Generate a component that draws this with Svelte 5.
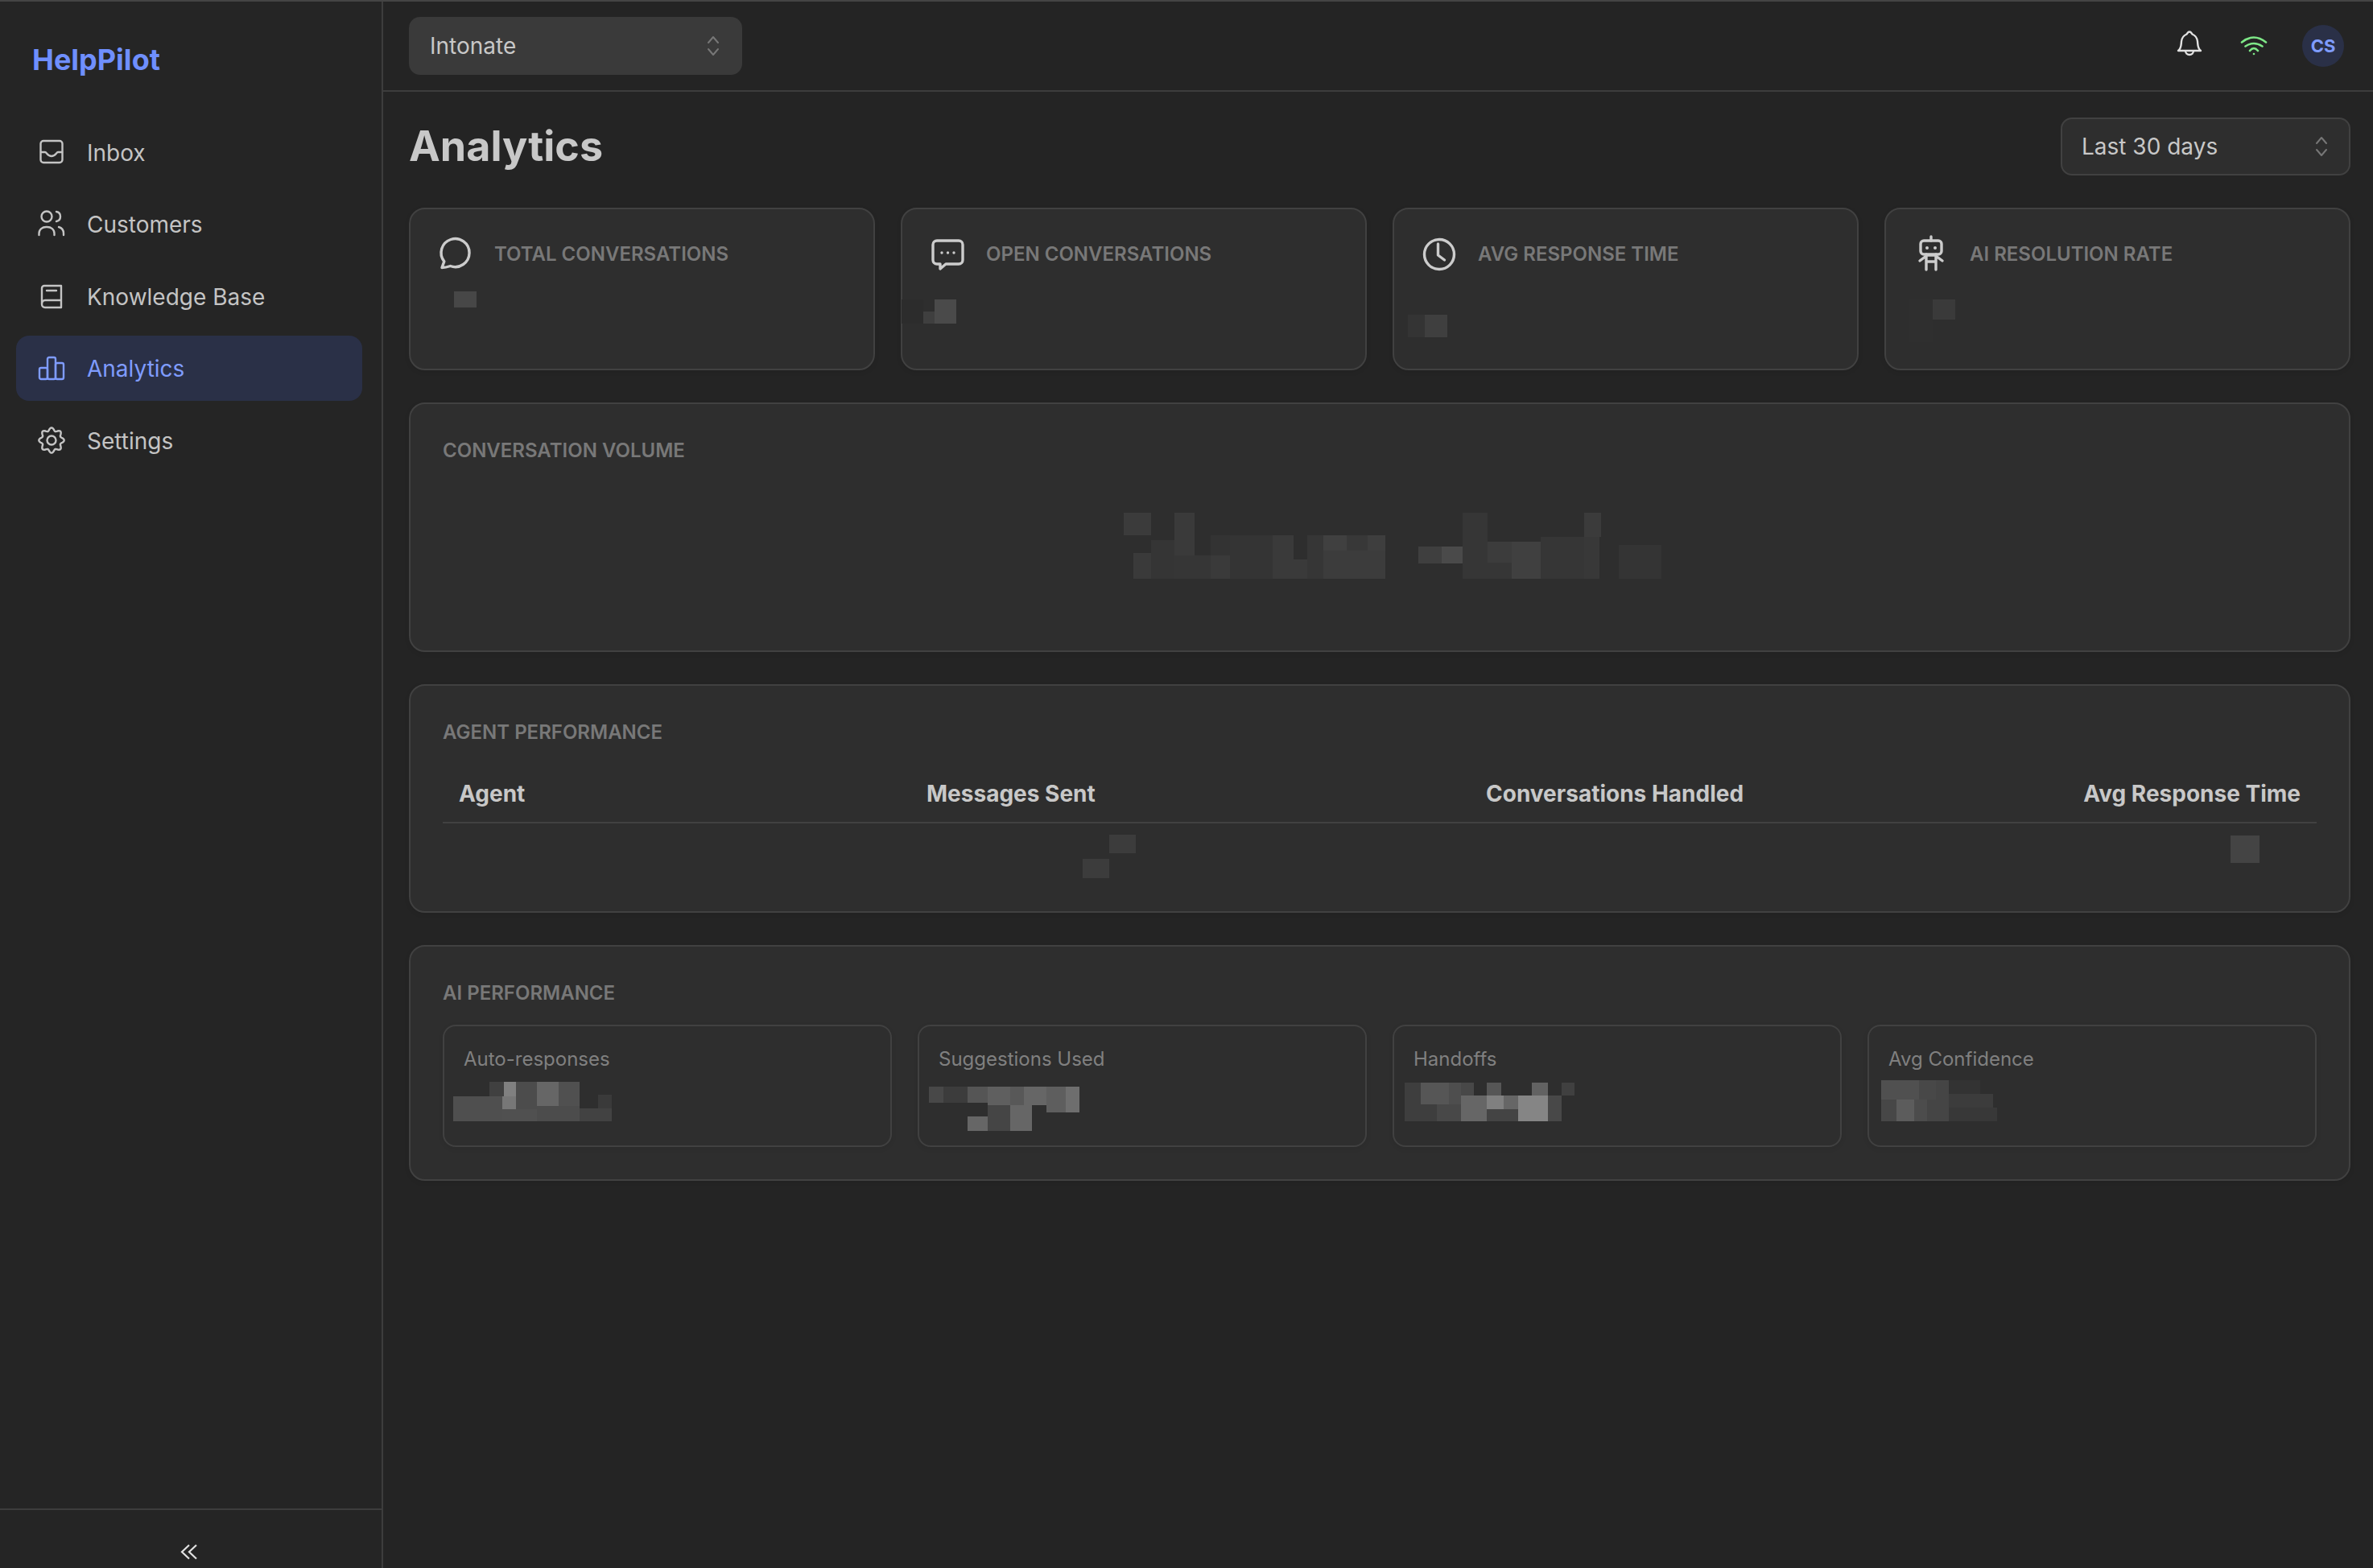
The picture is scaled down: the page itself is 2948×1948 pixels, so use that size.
<script>
  const mk = (ox, oy, sx, sy, list) =>
    list.map(([x0, y0, x1, y1, c]) => ({
      x: ox + x0 / sx,
      y: oy + y0 / sy,
      w: (x1 - x0) / sx,
      h: (y1 - y0) / sy,
      c
    }));

  const gearPath = (() => {
    const pts = [];
    for (let i = 0; i < 96; i++) {
      const t = (i / 96) * Math.PI * 2;
      const r = 13.8 + 1.9 * Math.cos(t * 8);
      pts.push(`${(18 + r * Math.sin(t)).toFixed(2)} ${(18 - r * Math.cos(t)).toFixed(2)}`);
    }
    return 'M' + pts.join('L') + 'Z';
  })();

  const nav = [
    { id: 'inbox', label: 'Inbox' },
    { id: 'users', label: 'Customers' },
    { id: 'book', label: 'Knowledge Base' },
    { id: 'bars', label: 'Analytics', active: true },
    { id: 'gear', label: 'Settings' }
  ];

  const stats = [
    {
      id: 'chat', label: 'TOTAL CONVERSATIONS', vb: '542 348 511 78',
      rects: mk(0, 0, 1, 1, [[564, 362, 592, 382, '#474747']])
    },
    {
      id: 'dots', label: 'OPEN CONVERSATIONS', vb: '1153 348 511 78',
      rects: mk(0, 0, 1, 1, [[1120, 372, 1147, 402, '#2c2c2c'], [1161, 372, 1188, 402, '#4a4a4a'], [1147, 387, 1161, 402, '#3f3f3f']])
    },
    {
      id: 'clock', label: 'AVG RESPONSE TIME', vb: '1764 348 511 78',
      rects: mk(0, 0, 1, 1, [[1749, 391, 1770, 419, '#343434'], [1770, 391, 1798, 419, '#3f3f3f']])
    },
    {
      id: 'robot', label: 'AI RESOLUTION RATE', vb: '2375 348 511 78',
      rects: mk(0, 0, 1, 1, [[2372, 372, 2401, 425, '#2f2f2f'], [2401, 372, 2429, 397, '#3a3a3a']])
    }
  ];

  const volume = mk(490, 480, 0.98, 2.376, [
    [888, 373, 921, 440, '#3b3b3b'], [921, 455, 950, 568, '#353535'], [900, 492, 921, 568, '#3a3a3a'],
    [950, 373, 974, 500, '#3a3a3a'], [950, 500, 994, 568, '#363636'], [994, 440, 1017, 500, '#333333'],
    [994, 500, 1017, 568, '#3a3a3a'], [1017, 440, 1069, 568, '#343434'], [1069, 440, 1095, 568, '#3a3a3a'],
    [1095, 510, 1111, 568, '#3a3a3a'], [1111, 440, 1131, 568, '#363636'], [1131, 485, 1206, 568, '#3c3c3c'],
    [1131, 440, 1159, 485, '#404040'], [1159, 440, 1185, 485, '#383838'], [1185, 440, 1206, 485, '#3e3e3e'],
    [1247, 473, 1275, 523, '#3f3f3f'], [1275, 473, 1300, 523, '#4a4a4a'], [1300, 373, 1331, 568, '#363636'],
    [1331, 459, 1360, 520, '#3c3c3c'], [1331, 520, 1360, 568, '#363636'], [1360, 459, 1396, 568, '#404040'],
    [1396, 444, 1448, 568, '#363636'], [1448, 373, 1469, 444, '#3b3b3b'], [1448, 444, 1467, 568, '#383838'],
    [1491, 468, 1543, 568, '#343434']
  ]);

  const agents = mk(0, 0, 1, 1, [
    [1378, 1037, 1411, 1060, '#3c3c3c'], [1345, 1067, 1378, 1091, '#3c3c3c'], [2771, 1038, 2807, 1072, '#444444']
  ]);

  const ai = [
    {
      label: 'Auto-responses', vb: '576 1339 506 60',
      rects: mk(490, 1160, 1.206, 3, [
        [88, 606, 162, 698, '#4f4f4f'], [142, 552, 164, 606, '#404040'], [164, 552, 182, 606, '#808080'],
        [162, 654, 214, 698, '#505050'], [182, 552, 214, 654, '#4c4c4c'], [162, 606, 182, 654, '#777777'],
        [214, 552, 246, 642, '#666666'], [246, 552, 277, 642, '#505050'], [214, 642, 277, 698, '#4c4c4c'],
        [277, 651, 326, 698, '#424242'], [305, 600, 326, 651, '#3a3a3a']
      ])
    },
    {
      label: 'Suggestions Used', vb: '1166 1339 506 60',
      rects: mk(490, 1160, 1.206, 3, [
        [801, 570, 823, 630, '#484848'], [823, 570, 859, 630, '#3c3c3c'], [859, 570, 889, 630, '#555555'],
        [889, 570, 923, 640, '#5f5f5f'], [923, 570, 943, 640, '#585858'], [943, 570, 977, 640, '#666666'],
        [977, 570, 1006, 665, '#5e5e5e'], [1006, 570, 1026, 665, '#6e6e6e'], [889, 640, 923, 735, '#454545'],
        [923, 640, 955, 735, '#666666'], [859, 681, 889, 735, '#666666']
      ])
    },
    {
      label: 'Handoffs', vb: '1756 1339 506 60',
      rects: mk(1700, 1160, 1.256, 3, [
        [57, 555, 82, 636, '#3e3e3e'], [82, 555, 125, 636, '#565656'], [125, 555, 144, 636, '#4e4e4e'],
        [144, 555, 165, 603, '#484848'], [185, 555, 207, 603, '#565656'], [255, 555, 280, 603, '#626262'],
        [302, 555, 322, 603, '#404040'], [57, 636, 107, 698, '#3e3e3e'], [107, 636, 144, 698, '#484848'],
        [144, 603, 185, 698, '#666666'], [185, 603, 211, 654, '#808080'], [211, 603, 234, 654, '#666666'],
        [185, 654, 234, 698, '#444444'], [234, 603, 280, 698, '#858585'], [280, 603, 302, 698, '#484848']
      ])
    },
    {
      label: 'Avg Confidence', vb: '2346 1339 506 60',
      rects: mk(1700, 1160, 1.256, 3, [
        [800, 546, 859, 618, '#505050'], [859, 546, 885, 618, '#484848'], [885, 546, 906, 618, '#454545'],
        [906, 546, 955, 597, '#333333'], [800, 618, 824, 698, '#474747'], [824, 618, 851, 698, '#5c5c5c'],
        [851, 618, 872, 698, '#4c4c4c'], [872, 618, 906, 698, '#454545'], [906, 597, 975, 648, '#3c3c3c'],
        [906, 648, 981, 698, '#383838']
      ])
    }
  ];
</script>

{#snippet mosaic(vb, rects, cls)}
  <svg class="area {cls}" viewBox={vb} width={vb.split(' ')[2]} height={vb.split(' ')[3]} aria-hidden="true">
    {#each rects as r}
      <rect x={r.x} y={r.y} width={r.w} height={r.h} fill={r.c} shape-rendering="crispEdges" />
    {/each}
  </svg>
{/snippet}

{#snippet updown()}
  <svg class="updown" viewBox="0 0 20 28" width="20" height="28" aria-hidden="true">
    <path d="M4 10l6-7 6 7M4 18l6 7 6-7" />
  </svg>
{/snippet}

{#snippet navIcon(id)}
  <svg class="nav-icon" viewBox="0 0 36 36" width="36" height="36" aria-hidden="true">
    {#if id === 'inbox'}
      <rect x="4.5" y="4" width="27" height="27" rx="3.5" />
      <path d="M5 18h5c2 0 3 5 8 5s6-5 8-5h5" />
    {:else if id === 'users'}
      <circle cx="12" cy="9" r="6.5" />
      <path d="M24 3c3 .5 5 3 5 6s-2 5.5-5 6M2.500 32v-2c0-5 4-8 9-8h1c5 0 9 3 9 8v2M27 22c3.500 1 6 4 6 8v2" />
    {:else if id === 'book'}
      <path d="M6 28V8a3 3 0 0 1 3-3h21v27H10c-2.500 0-4-1.500-4-4s1.500-5 4-5h20M12 11h12" />
    {:else if id === 'bars'}
      <rect x="3" y="18" width="10" height="14" rx="2" />
      <rect x="13" y="5" width="10" height="27" rx="2" />
      <rect x="23" y="12" width="10" height="20" rx="2" />
    {:else}
      <path d={gearPath} />
      <circle cx="18" cy="18" r="5.500" />
    {/if}
  </svg>
{/snippet}

{#snippet statIcon(id)}
  <svg class="stat-icon" viewBox="0 0 48 48" width="48" height="48" aria-hidden="true">
    {#if id === 'chat'}
      <path d="M7 40.500l2.800-7.600A17.500 17.500 0 1 1 17.500 38.500c-3 1-7 2-10.500 2z" />
    {:else if id === 'dots'}
      <path d="M11 7h27a5 5 0 0 1 5 5v19a5 5 0 0 1-5 5H22l-7 6v-6h-4a5 5 0 0 1-5-5V12a5 5 0 0 1 5-5z" />
      <circle class="solid" cx="17" cy="22" r="1.700" />
      <circle class="solid" cx="24.500" cy="22" r="1.700" />
      <circle class="solid" cx="32" cy="22" r="1.700" />
    {:else if id === 'clock'}
      <circle cx="24" cy="24" r="18.500" />
      <path d="M22.500 11v14l8 6" />
    {:else}
      <path d="M24 2v5M18 24v19M30 24v19M18 33h12M18 26l-8 6M30 26l8 6M18 25h12" />
      <rect x="11" y="7" width="26" height="17" rx="4" />
      <circle class="solid" cx="19" cy="16" r="2" />
      <circle class="solid" cx="29" cy="16" r="2" />
    {/if}
  </svg>
{/snippet}

<div class="shell">
  <aside class="sidebar">
    <div class="logo">HelpPilot</div>
    <nav class="nav">
      {#each nav as item}
        <a class="nav-item" class:active={item.active} href="#{item.id}">
          {@render navIcon(item.id)}
          <span>{item.label}</span>
        </a>
      {/each}
    </nav>
    <div class="collapse">
      <svg viewBox="0 0 22 20" width="22" height="20" aria-hidden="true">
        <path d="M11 1.500L2 10l9 8.500M20 1.500L11 10l9 8.500" />
      </svg>
    </div>
  </aside>

  <div class="main">
    <header class="topbar">
      <div class="workspace">
        <span>Intonate</span>
        {@render updown()}
      </div>
      <div class="top-actions">
        <svg class="bell" viewBox="0 0 36 36" width="36" height="36" aria-hidden="true">
          <path d="M18 2.500c-2 0-2.500 2-3.500 3C11 7 8.500 9.500 8 14.500c-.5 5 0 8.500-4 11.500h28c-4-3-3.500-6.500-4-11.500-.5-5-3-7.500-6.500-9-1-1-1.500-3-3.500-3z" />
          <path d="M13 26a5 5 0 0 0 10 0" />
        </svg>
        <svg class="wifi" viewBox="0 0 36 36" width="36" height="36" aria-hidden="true">
          <path d="M3 13.500Q18 1.500 33 13.500M7.500 18.500Q18 11.500 28.500 18.500M13 24Q18 18 23 24" />
          <circle cx="18" cy="28" r="1.300" />
        </svg>
        <div class="avatar">CS</div>
      </div>
    </header>

    <main class="content">
      <div class="page-head">
        <h1>Analytics</h1>
        <div class="range">
          <span>Last 30 days</span>
          {@render updown()}
        </div>
      </div>

      <section class="stats">
        {#each stats as s}
          <div class="card stat">
            <div class="stat-head">
              {@render statIcon(s.id)}
              <span class="label">{s.label}</span>
            </div>
            {@render mosaic(s.vb, s.rects, 'stat-value')}
          </div>
        {/each}
      </section>

      <section class="card panel">
        <div class="label">CONVERSATION VOLUME</div>
        {@render mosaic('550 590 2328 178', volume, 'chart')}
      </section>

      <section class="card panel">
        <div class="label">AGENT PERFORMANCE</div>
        <div class="thead">
          <span>Agent</span>
          <span>Messages Sent</span>
          <span>Conversations Handled</span>
          <span class="right">Avg Response Time</span>
        </div>
        {@render mosaic('550 1023 2328 69', agents, 'rows')}
      </section>

      <section class="card panel">
        <div class="label">AI PERFORMANCE</div>
        <div class="ai-grid">
          {#each ai as m}
            <div class="sub">
              <div class="sub-label">{m.label}</div>
              {@render mosaic(m.vb, m.rects, 'sub-value')}
            </div>
          {/each}
        </div>
      </section>
    </main>
  </div>
</div>

<style>
  :global(body) {
    margin: 0;
    background: #242424;
    font-family: Inter, "Liberation Sans", sans-serif;
  }

  .shell {
    display: flex;
    height: 1948px;
    box-sizing: border-box;
    border-top: 2px solid #444444;
    overflow: hidden;
    color: #c8c8c8;
  }

  .sidebar {
    width: 476px;
    flex: none;
    box-sizing: border-box;
    border-right: 2px solid #3d3d3d;
    background: #252525;
    display: flex;
    flex-direction: column;
  }

  .logo {
    padding: 50px 0 0 40px;
    font-size: 36px;
    line-height: 44px;
    font-weight: 700;
    color: #6f8fff;
    margin-bottom: 52px;
  }

  .nav {
    display: flex;
    flex-direction: column;
    gap: 8px;
    padding: 0 24px 0 20px;
    flex: 1;
  }

  .nav-item {
    display: flex;
    align-items: center;
    gap: 26px;
    height: 81.5px;
    padding-left: 26px;
    border-radius: 16px;
    font-size: 28px;
    color: #c4c4c4;
    text-decoration: none;
  }

  .nav-item span {
    padding-top: 2px;
  }

  .nav-item.active {
    background: #2a3047;
    color: #7f9cff;
  }

  .nav-icon {
    flex: none;
    fill: none;
    stroke: #c4c4c4;
    stroke-width: 2.4;
    stroke-linecap: round;
    stroke-linejoin: round;
  }

  .active .nav-icon {
    stroke: #7f9cff;
  }

  .collapse {
    border-top: 2px solid #3d3d3d;
    height: 74px;
    display: flex;
    justify-content: center;
    padding-top: 42px;
    box-sizing: border-box;
  }

  .collapse svg {
    fill: none;
    stroke: #e2e2e2;
    stroke-width: 2.2;
    margin-left: -4px;
  }

  .main {
    flex: 1;
    min-width: 0;
    display: flex;
    flex-direction: column;
  }

  .topbar {
    height: 112px;
    flex: none;
    box-sizing: border-box;
    display: flex;
    align-items: center;
    justify-content: space-between;
    padding: 0 36px 0 32px;
    border-bottom: 2px solid #3d3d3d;
  }

  .workspace {
    width: 414px;
    height: 72px;
    box-sizing: border-box;
    padding: 0 26px;
    display: flex;
    align-items: center;
    justify-content: space-between;
    border-radius: 14px;
    background: #3a3a3a;
    font-size: 28px;
    color: #c8c8c8;
  }

  .updown {
    flex: none;
    fill: none;
    stroke: #777777;
    stroke-width: 2;
    stroke-linecap: round;
    stroke-linejoin: round;
  }

  .top-actions {
    display: flex;
    align-items: center;
  }

  .bell {
    fill: none;
    stroke: #e2e2e2;
    stroke-width: 2.4;
    stroke-linejoin: round;
    margin: 0 44px 4px 0;
  }

  .wifi {
    fill: none;
    stroke: #7ee787;
    stroke-width: 2.6;
    stroke-linecap: round;
    margin-right: 42px;
  }

  .wifi circle {
    fill: #7ee787;
    stroke: none;
  }

  .avatar {
    width: 52px;
    height: 52px;
    border-radius: 50%;
    background: #2a3047;
    color: #7f9cff;
    font-size: 22px;
    font-weight: 700;
    display: flex;
    align-items: center;
    justify-content: center;
  }

  .content {
    flex: 1;
    padding: 32px 28px 0 32px;
    display: flex;
    flex-direction: column;
    gap: 40px;
  }

  .page-head {
    display: flex;
    align-items: center;
    justify-content: space-between;
    height: 72px;
  }

  h1 {
    margin: 0;
    font-size: 52px;
    line-height: 72px;
    font-weight: 700;
    color: #c8c8c8;
  }

  .range {
    width: 360px;
    height: 72px;
    box-sizing: border-box;
    padding: 0 24px;
    display: flex;
    align-items: center;
    justify-content: space-between;
    background: #2e2e2e;
    border: 2px solid #414141;
    border-radius: 14px;
    font-size: 28px;
    color: #c8c8c8;
  }

  .stats {
    display: grid;
    grid-template-columns: repeat(4, 1fr);
    gap: 32px;
  }

  .card {
    background: #2e2e2e;
    border: 2px solid #414141;
    border-radius: 20px;
    box-shadow: 0 2px 6px rgba(0, 0, 0, 0.08);
  }

  .stat {
    height: 202px;
    box-sizing: border-box;
    padding: 32px;
  }

  .stat-head {
    display: flex;
    align-items: center;
    gap: 24px;
    height: 48px;
  }

  .stat-icon {
    flex: none;
    fill: none;
    stroke: #cccccc;
    stroke-width: 3.4;
    stroke-linecap: round;
    stroke-linejoin: round;
  }

  .stat-icon .solid {
    fill: #cccccc;
    stroke: none;
  }

  .label {
    font-size: 24px;
    line-height: 36px;
    font-weight: 600;
    color: #787878;
  }

  .area {
    display: block;
    overflow: visible;
  }

  :global(.stat-value) {
    margin-top: 8px;
  }

  .panel {
    padding: 40px;
  }

  :global(.chart) {
    margin-top: 12px;
  }

  .thead {
    display: grid;
    grid-template-columns: 581px 695px 1fr auto;
    margin-top: 22px;
    height: 73px;
    box-sizing: border-box;
    padding: 0 20px;
    align-items: center;
    border-bottom: 2px solid #414141;
    font-size: 28px;
    font-weight: 700;
    color: #c8c8c8;
  }

  .right {
    text-align: right;
  }

  .ai-grid {
    display: grid;
    grid-template-columns: repeat(4, 1fr);
    gap: 32px;
    margin-top: 21px;
  }

  .sub {
    height: 152px;
    box-sizing: border-box;
    padding: 24px;
    background: #2e2e2e;
    border: 2px solid #414141;
    border-radius: 16px;
    box-shadow: 0 2px 6px rgba(0, 0, 0, 0.08);
  }

  .sub-label {
    font-size: 24px;
    line-height: 34px;
    color: #808080;
  }

  :global(.sub-value) {
    margin-top: 6px;
  }
</style>
